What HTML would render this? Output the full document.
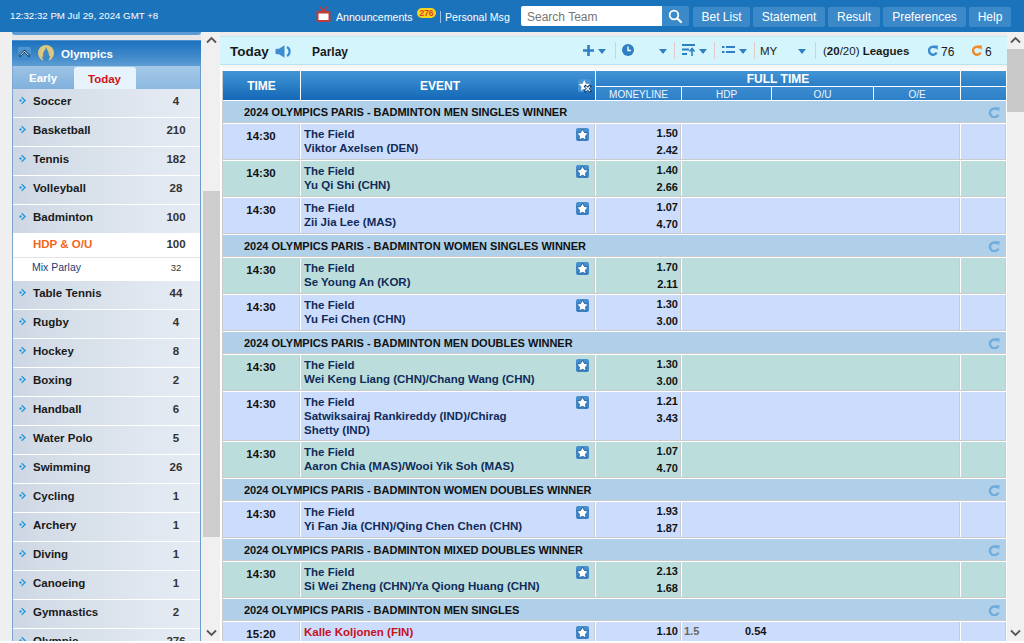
<!DOCTYPE html><html><head><meta charset="utf-8"><style>
*{box-sizing:border-box;margin:0;padding:0}
html,body{width:1024px;height:643px;overflow:hidden}
body{position:relative;background:#efefef;font-family:"Liberation Sans",sans-serif;color:#000}
.ab{position:absolute}
.t{position:absolute;white-space:nowrap;line-height:1}
#top{left:0;top:0;width:1024px;height:32px;background:#1b74bb}
.btn{position:absolute;top:7px;height:20px;background:#3b89c9;border-radius:2px;color:#fff;font-size:12px;line-height:20px;text-align:center}
.sb{position:absolute;background:#f0f0f0}
.chev{position:absolute;width:7px;height:7px;border-left:2px solid #555;border-top:2px solid #555}
.srow{position:absolute;left:13px;width:187px;height:28px;background:linear-gradient(to right,#cdd6e3 0px,#d2dbe6 25px,#d5dee8 45px,#dae2ec 90px,#e2e8f1 140px,#e5ebf3 187px)}
.srow .nm{position:absolute;left:20px;top:7px;font-size:11.5px;font-weight:bold;color:#1a1a1a;white-space:nowrap;line-height:1}
.srow .ct{position:absolute;left:123px;width:80px;top:7px;font-size:11.5px;font-weight:bold;color:#333;text-align:center;white-space:nowrap;line-height:1}
.arr{position:absolute;left:5px;top:7px;width:9px;height:9px}
.row{position:absolute;left:223px;width:783px}
.c{position:absolute;top:0}
.lav{background:#ccdcfc}
.tea{background:#bbdedd}
.lg{background:#afd0e8}
.gl{background:#cbcbcb}
.ev{font-size:11.5px;font-weight:bold;color:#112b58;line-height:14px;white-space:nowrap}
.tm{font-size:11.5px;font-weight:bold;color:#111;text-align:center;line-height:1}
.odds{font-size:11px;font-weight:bold;color:#111;text-align:right;line-height:17px}
.star{position:absolute;width:13px;height:13px;background:linear-gradient(#4890cf,#3a83c5);border-radius:2px}
.hd{position:absolute;background:linear-gradient(#4296d6,#1468b6);color:#fff;font-weight:bold;font-size:12px;text-align:center}
</style></head><body>
<div id="top" class="ab">
<div class="t" style="left:10px;top:11px;font-size:9.7px;color:#fff">12:32:32 PM Jul 29, 2024 GMT +8</div>
<svg class="ab" style="left:316px;top:6px" width="15" height="16" viewBox="0 0 15 16"><path d="M4 1 L7.5 5 L11 1" stroke="#c23b3b" stroke-width="1.6" fill="none"/><rect x="0.5" y="5" width="14" height="11" rx="1" fill="#c23b3b"/><rect x="2.5" y="7.5" width="10" height="6.5" fill="#fff"/></svg>
<div class="t" style="left:336px;top:12px;font-size:10.6px;color:#fff">Announcements</div>
<div class="ab" style="left:417px;top:8px;width:19px;height:10px;border-radius:5px;background:#f4d51c"></div>
<div class="t" style="left:417px;top:9px;width:19px;text-align:center;font-size:8.5px;font-weight:bold;color:#e0412a">276</div>
<div class="ab" style="left:440px;top:11px;width:1px;height:12px;background:#9cc3e6"></div>
<div class="t" style="left:445px;top:12px;font-size:10.6px;color:#fff">Personal Msg</div>
<div class="ab" style="left:521px;top:6px;width:141px;height:20px;background:#fff;border-radius:2px 0 0 2px"></div>
<div class="t" style="left:527px;top:11px;font-size:12px;color:#777">Search Team</div>
<div class="ab" style="left:662px;top:6px;width:27px;height:20px;background:#3b89c9;border-radius:0 2px 2px 0"></div>
<svg class="ab" style="left:668px;top:9px" width="15" height="15" viewBox="0 0 15 15"><circle cx="6" cy="6" r="4.3" stroke="#fff" stroke-width="1.8" fill="none"/><path d="M9.2 9.2 L13 13" stroke="#fff" stroke-width="2.2" stroke-linecap="round"/></svg>
<div class="btn" style="left:693px;width:57px">Bet List</div>
<div class="btn" style="left:753px;width:72px">Statement</div>
<div class="btn" style="left:828px;width:52px">Result</div>
<div class="btn" style="left:883px;width:83px">Preferences</div>
<div class="btn" style="left:969px;width:42px">Help</div>
</div>
<div class="ab" style="left:12px;top:32px;width:189px;height:8px;background:#e6e6e6"></div>
<div class="ab" style="left:12px;top:32px;width:189px;height:3px;background:#5b9bd3;border-radius:0 0 3px 3px"></div>
<div class="ab" style="left:12px;top:40px;width:189px;height:603px;background:#fff;border-left:1px solid #7ea8d3;border-right:1px solid #6d9dcf"></div>
<div class="ab" style="left:12px;top:40px;width:189px;height:26px;background:linear-gradient(#1c72bf,#3f88c9 60%,#5e9dd3);border-top:1px solid #4e8fcc"></div>
<div class="ab" style="left:18px;top:47px;width:13px;height:13px;background:linear-gradient(#5398d3,#3f88c9);border-radius:2px"></div>
<svg class="ab" style="left:18px;top:47px" width="13" height="13" viewBox="0 0 13 13"><path d="M2.2 8.5 L6.5 4.2 L10.8 8.5" stroke="#0d3b66" stroke-width="2.4" fill="none" stroke-linecap="square"/><path d="M2.2 8.5 L6.5 4.2 L10.8 8.5" stroke="#fff" stroke-width="1" fill="none"/></svg>
<svg class="ab" style="left:38px;top:45px" width="16" height="16" viewBox="0 0 16 16"><circle cx="8" cy="8" r="8" fill="#dcc87e"/><path d="M7.9 2 C8.6 4.5 11 6.2 10.8 9.8 L12.2 12 C11.2 13.4 10.8 14.6 10.5 16.5 L5.6 16.5 C5.3 14.8 4.8 13.5 4 12.2 L5.2 11.2 C4.6 8.4 5.6 6.6 6.7 5.2 C7.4 4.2 7.8 3.2 7.9 2 Z" fill="#3f88c8"/></svg>
<div class="t" style="left:61px;top:49px;font-size:11.5px;font-weight:bold;color:#fff">Olympics</div>
<div class="ab" style="left:13px;top:66px;width:187px;height:23px;background:linear-gradient(#a4c8e8,#8db9e0)"></div>
<div class="ab" style="left:13px;top:66px;width:61px;height:23px;background:linear-gradient(#9ec4e6,#7fb0dc)"></div>
<div class="t" style="left:29px;top:73px;font-size:11.5px;font-weight:bold;color:#fff">Early</div>
<div class="ab" style="left:74px;top:67px;width:62px;height:22px;background:#e6f3fc;border-radius:3px 3px 0 0"></div>
<div class="t" style="left:88px;top:74px;font-size:11.5px;font-weight:bold;color:#d0121b">Today</div>
<div class="srow" style="top:89px"><svg class="arr" viewBox="0 0 9 9"><path d="M1 4.5 L2.5 3 L4 4.5 L2.5 6 Z" fill="#2d9ad8"/><path d="M3.6 1.2 L7 4.5 L3.6 7.8" stroke="#2d9ad8" stroke-width="1.5" fill="none"/></svg><div class="nm">Soccer</div><div class="ct">4</div></div>
<div class="srow" style="top:118px"><svg class="arr" viewBox="0 0 9 9"><path d="M1 4.5 L2.5 3 L4 4.5 L2.5 6 Z" fill="#2d9ad8"/><path d="M3.6 1.2 L7 4.5 L3.6 7.8" stroke="#2d9ad8" stroke-width="1.5" fill="none"/></svg><div class="nm">Basketball</div><div class="ct">210</div></div>
<div class="srow" style="top:147px"><svg class="arr" viewBox="0 0 9 9"><path d="M1 4.5 L2.5 3 L4 4.5 L2.5 6 Z" fill="#2d9ad8"/><path d="M3.6 1.2 L7 4.5 L3.6 7.8" stroke="#2d9ad8" stroke-width="1.5" fill="none"/></svg><div class="nm">Tennis</div><div class="ct">182</div></div>
<div class="srow" style="top:176px"><svg class="arr" viewBox="0 0 9 9"><path d="M1 4.5 L2.5 3 L4 4.5 L2.5 6 Z" fill="#2d9ad8"/><path d="M3.6 1.2 L7 4.5 L3.6 7.8" stroke="#2d9ad8" stroke-width="1.5" fill="none"/></svg><div class="nm">Volleyball</div><div class="ct">28</div></div>
<div class="srow" style="top:205px"><svg class="arr" viewBox="0 0 9 9"><path d="M1 4.5 L2.5 3 L4 4.5 L2.5 6 Z" fill="#2d9ad8"/><path d="M3.6 1.2 L7 4.5 L3.6 7.8" stroke="#2d9ad8" stroke-width="1.5" fill="none"/></svg><div class="nm">Badminton</div><div class="ct">100</div></div>
<div class="ab" style="left:13px;top:233px;width:187px;height:48px;background:#fff"></div>
<div class="ab" style="left:13px;top:257px;width:187px;height:1px;background:#e4e4e4"></div>
<div class="t" style="left:33px;top:239px;font-size:11.5px;font-weight:bold;color:#f4661b">HDP &amp; O/U</div>
<div class="t" style="left:136px;width:80px;text-align:center;top:239px;font-size:11.5px;font-weight:bold;color:#333">100</div>
<div class="t" style="left:32px;top:262px;font-size:10.5px;color:#1b3d7a">Mix Parlay</div>
<div class="t" style="left:136px;width:80px;text-align:center;top:263px;font-size:9.5px;color:#333">32</div>
<div class="srow" style="top:281px"><svg class="arr" viewBox="0 0 9 9"><path d="M1 4.5 L2.5 3 L4 4.5 L2.5 6 Z" fill="#2d9ad8"/><path d="M3.6 1.2 L7 4.5 L3.6 7.8" stroke="#2d9ad8" stroke-width="1.5" fill="none"/></svg><div class="nm">Table Tennis</div><div class="ct">44</div></div>
<div class="srow" style="top:310px"><svg class="arr" viewBox="0 0 9 9"><path d="M1 4.5 L2.5 3 L4 4.5 L2.5 6 Z" fill="#2d9ad8"/><path d="M3.6 1.2 L7 4.5 L3.6 7.8" stroke="#2d9ad8" stroke-width="1.5" fill="none"/></svg><div class="nm">Rugby</div><div class="ct">4</div></div>
<div class="srow" style="top:339px"><svg class="arr" viewBox="0 0 9 9"><path d="M1 4.5 L2.5 3 L4 4.5 L2.5 6 Z" fill="#2d9ad8"/><path d="M3.6 1.2 L7 4.5 L3.6 7.8" stroke="#2d9ad8" stroke-width="1.5" fill="none"/></svg><div class="nm">Hockey</div><div class="ct">8</div></div>
<div class="srow" style="top:368px"><svg class="arr" viewBox="0 0 9 9"><path d="M1 4.5 L2.5 3 L4 4.5 L2.5 6 Z" fill="#2d9ad8"/><path d="M3.6 1.2 L7 4.5 L3.6 7.8" stroke="#2d9ad8" stroke-width="1.5" fill="none"/></svg><div class="nm">Boxing</div><div class="ct">2</div></div>
<div class="srow" style="top:397px"><svg class="arr" viewBox="0 0 9 9"><path d="M1 4.5 L2.5 3 L4 4.5 L2.5 6 Z" fill="#2d9ad8"/><path d="M3.6 1.2 L7 4.5 L3.6 7.8" stroke="#2d9ad8" stroke-width="1.5" fill="none"/></svg><div class="nm">Handball</div><div class="ct">6</div></div>
<div class="srow" style="top:426px"><svg class="arr" viewBox="0 0 9 9"><path d="M1 4.5 L2.5 3 L4 4.5 L2.5 6 Z" fill="#2d9ad8"/><path d="M3.6 1.2 L7 4.5 L3.6 7.8" stroke="#2d9ad8" stroke-width="1.5" fill="none"/></svg><div class="nm">Water Polo</div><div class="ct">5</div></div>
<div class="srow" style="top:455px"><svg class="arr" viewBox="0 0 9 9"><path d="M1 4.5 L2.5 3 L4 4.5 L2.5 6 Z" fill="#2d9ad8"/><path d="M3.6 1.2 L7 4.5 L3.6 7.8" stroke="#2d9ad8" stroke-width="1.5" fill="none"/></svg><div class="nm">Swimming</div><div class="ct">26</div></div>
<div class="srow" style="top:484px"><svg class="arr" viewBox="0 0 9 9"><path d="M1 4.5 L2.5 3 L4 4.5 L2.5 6 Z" fill="#2d9ad8"/><path d="M3.6 1.2 L7 4.5 L3.6 7.8" stroke="#2d9ad8" stroke-width="1.5" fill="none"/></svg><div class="nm">Cycling</div><div class="ct">1</div></div>
<div class="srow" style="top:513px"><svg class="arr" viewBox="0 0 9 9"><path d="M1 4.5 L2.5 3 L4 4.5 L2.5 6 Z" fill="#2d9ad8"/><path d="M3.6 1.2 L7 4.5 L3.6 7.8" stroke="#2d9ad8" stroke-width="1.5" fill="none"/></svg><div class="nm">Archery</div><div class="ct">1</div></div>
<div class="srow" style="top:542px"><svg class="arr" viewBox="0 0 9 9"><path d="M1 4.5 L2.5 3 L4 4.5 L2.5 6 Z" fill="#2d9ad8"/><path d="M3.6 1.2 L7 4.5 L3.6 7.8" stroke="#2d9ad8" stroke-width="1.5" fill="none"/></svg><div class="nm">Diving</div><div class="ct">1</div></div>
<div class="srow" style="top:571px"><svg class="arr" viewBox="0 0 9 9"><path d="M1 4.5 L2.5 3 L4 4.5 L2.5 6 Z" fill="#2d9ad8"/><path d="M3.6 1.2 L7 4.5 L3.6 7.8" stroke="#2d9ad8" stroke-width="1.5" fill="none"/></svg><div class="nm">Canoeing</div><div class="ct">1</div></div>
<div class="srow" style="top:600px"><svg class="arr" viewBox="0 0 9 9"><path d="M1 4.5 L2.5 3 L4 4.5 L2.5 6 Z" fill="#2d9ad8"/><path d="M3.6 1.2 L7 4.5 L3.6 7.8" stroke="#2d9ad8" stroke-width="1.5" fill="none"/></svg><div class="nm">Gymnastics</div><div class="ct">2</div></div>
<div class="srow" style="top:629px"><svg class="arr" viewBox="0 0 9 9"><path d="M1 4.5 L2.5 3 L4 4.5 L2.5 6 Z" fill="#2d9ad8"/><path d="M3.6 1.2 L7 4.5 L3.6 7.8" stroke="#2d9ad8" stroke-width="1.5" fill="none"/></svg><div class="nm">Olympic</div><div class="ct">276</div></div>
<div class="sb" style="left:201px;top:32px;width:19px;height:611px"></div>
<div class="ab" style="left:220px;top:32px;width:2px;height:611px;background:#fff"></div>
<div class="ab" style="left:203px;top:191px;width:17px;height:346px;background:#cdcdcd"></div>
<svg class="ab" style="left:206px;top:36px" width="11" height="8" viewBox="0 0 11 8"><path d="M1 6.5 L5.5 2 L10 6.5" stroke="#555" stroke-width="1.8" fill="none"/></svg>
<svg class="ab" style="left:206px;top:629px" width="11" height="8" viewBox="0 0 11 8"><path d="M1 1.5 L5.5 6 L10 1.5" stroke="#555" stroke-width="1.8" fill="none"/></svg>
<div class="sb" style="left:1007px;top:32px;width:17px;height:611px"></div>
<div class="ab" style="left:1007px;top:49px;width:17px;height:63px;background:#c8c8c8"></div>
<svg class="ab" style="left:1010px;top:629px" width="11" height="8" viewBox="0 0 11 8"><path d="M1 1.5 L5.5 6 L10 1.5" stroke="#555" stroke-width="1.8" fill="none"/></svg>
<svg class="ab" style="left:1010px;top:36px" width="11" height="8" viewBox="0 0 11 8"><path d="M1 6.5 L5.5 2 L10 6.5" stroke="#555" stroke-width="1.8" fill="none"/></svg>
<div class="ab" style="left:222px;top:32px;width:785px;height:611px;background:#fff"></div>
<div class="ab" style="left:220px;top:32px;width:787px;height:4px;background:#ececec"></div>
<div class="ab" style="left:220px;top:36px;width:787px;height:29px;background:#d5f5fd;border-top:1px solid #c0e8f2;border-bottom:1px solid #b7e2ee"></div>
<div class="t" style="left:230px;top:45px;font-size:13.5px;font-weight:bold;color:#1a1a1a">Today</div>
<svg class="ab" style="left:275px;top:45px" width="17" height="13" viewBox="0 0 17 13"><path d="M0.5 5 Q0.5 3.8 1.8 3.8 H4 L9.5 0.3 V12.7 L4 9.2 H1.8 Q0.5 9.2 0.5 8 Z" fill="#3d8bd0"/><path d="M12 2 A5.2 5.2 0 0 1 12 11" stroke="#3d8bd0" stroke-width="2.2" fill="none"/></svg>
<div class="t" style="left:312px;top:46px;font-size:12px;font-weight:bold;color:#1a1a1a">Parlay</div>
<svg class="ab" style="left:583px;top:45px" width="11" height="11" viewBox="0 0 11 11"><path d="M5.5 0 V11 M0 5.5 H11" stroke="#2f7fc4" stroke-width="2.6"/></svg>
<svg class="ab" style="left:598px;top:49px" width="8" height="5" viewBox="0 0 8 5"><path d="M0 0 H8 L4 5 Z" fill="#2f7fc4"/></svg>
<div class="ab" style="left:615px;top:42px;width:1px;height:17px;background:#e3c9c9"></div>
<svg class="ab" style="left:622px;top:44px" width="12" height="12" viewBox="0 0 12 12"><circle cx="6" cy="6" r="6" fill="#2f7fc4"/><path d="M6 2.5 V6.5 H9" stroke="#fff" stroke-width="1.4" fill="none"/></svg>
<svg class="ab" style="left:659px;top:49px" width="8" height="5" viewBox="0 0 8 5"><path d="M0 0 H8 L4 5 Z" fill="#2f7fc4"/></svg>
<div class="ab" style="left:674px;top:42px;width:1px;height:17px;background:#e3c9c9"></div>
<svg class="ab" style="left:682px;top:44px" width="14" height="12" viewBox="0 0 14 12"><path d="M0 1 H13 M0 5.5 H7 M0 10 H5" stroke="#2f7fc4" stroke-width="1.8"/><path d="M10 12 V5 M7.5 7.5 L10 4.5 L12.5 7.5" stroke="#2f7fc4" stroke-width="1.6" fill="none"/></svg>
<svg class="ab" style="left:699px;top:49px" width="8" height="5" viewBox="0 0 8 5"><path d="M0 0 H8 L4 5 Z" fill="#2f7fc4"/></svg>
<div class="ab" style="left:714px;top:42px;width:1px;height:17px;background:#e3c9c9"></div>
<svg class="ab" style="left:722px;top:45px" width="13" height="10" viewBox="0 0 13 10"><path d="M0 2 H2.5 M4 2 H13 M0 7 H2.5 M4 7 H13" stroke="#2f7fc4" stroke-width="2"/></svg>
<svg class="ab" style="left:739px;top:49px" width="8" height="5" viewBox="0 0 8 5"><path d="M0 0 H8 L4 5 Z" fill="#2f7fc4"/></svg>
<div class="ab" style="left:754px;top:42px;width:1px;height:17px;background:#e3c9c9"></div>
<div class="t" style="left:760px;top:46px;font-size:11.5px;color:#222">MY</div>
<svg class="ab" style="left:798px;top:49px" width="8" height="5" viewBox="0 0 8 5"><path d="M0 0 H8 L4 5 Z" fill="#2f7fc4"/></svg>
<div class="ab" style="left:815px;top:42px;width:1px;height:17px;background:#e3c9c9"></div>
<div class="t" style="left:823px;top:46px;font-size:11.5px;color:#1a1a1a">(<b>20</b>/20) <b>Leagues</b></div>
<svg class="ab" style="left:928px;top:45px" width="10" height="11" viewBox="0 0 10 11"><path d="M8 3 A4 4 0 1 0 8.6 7.5" stroke="#3d8bd0" stroke-width="2.4" fill="none"/><path d="M5.5 0.5 L10 0.5 L9.5 5 Z" fill="#3d8bd0"/></svg>
<div class="t" style="left:941px;top:46px;font-size:12px;color:#1a1a1a">76</div>
<svg class="ab" style="left:972px;top:45px" width="10" height="11" viewBox="0 0 10 11"><path d="M8 3 A4 4 0 1 0 8.6 7.5" stroke="#f08a2a" stroke-width="2.4" fill="none"/><path d="M5.5 0.5 L10 0.5 L9.5 5 Z" fill="#f08a2a"/></svg>
<div class="t" style="left:985px;top:46px;font-size:12px;color:#1a1a1a">6</div>
<div class="ab" style="left:222px;top:65px;width:785px;height:6px;background:linear-gradient(#f3f3f3,#fcfcfc)"></div>
<div class="ab" style="left:222px;top:71px;width:1px;height:572px;background:#cbcbcb"></div>
<div class="hd" style="left:223px;top:71px;width:77px;height:29px;line-height:31px">TIME</div>
<div class="hd" style="left:301px;top:71px;width:294px;height:29px;line-height:31px;padding-right:16px">EVENT</div>
<div class="ab" style="left:578px;top:79px;width:13px;height:13px;background:#4a94d3;border-radius:2px"></div>
<svg class="ab" style="left:578px;top:79px" width="14" height="14" viewBox="0 0 14 14"><path d="M6.20 1.10 L7.85 4.63 L11.72 5.11 L8.86 7.77 L9.61 11.59 L6.20 9.70 L2.79 11.59 L3.54 7.77 L0.68 5.11 L4.55 4.63 Z" fill="#fff"/><path d="M7.5 7.5 L12 12 M12 7.5 L7.5 12" stroke="#0d3e6e" stroke-width="2.8" stroke-linecap="square" fill="none"/><path d="M7.5 7.5 L12 12 M12 7.5 L7.5 12" stroke="#fff" stroke-width="1.1" fill="none"/></svg>
<div class="ab" style="left:596px;top:71px;width:364px;height:15px;background:linear-gradient(#4296d6,#2b7dc6);color:#fff;font-weight:bold;font-size:12px;text-align:center;line-height:17px">FULL TIME</div>
<div class="ab" style="left:961px;top:71px;width:45px;height:15px;background:linear-gradient(#4296d6,#2b7dc6)"></div>
<div class="ab" style="left:596px;top:87px;width:85px;height:13px;background:linear-gradient(#3a8bcf,#2e81c9);color:#eef5ff;font-size:10px;text-align:center;line-height:16px">MONEYLINE</div>
<div class="ab" style="left:682px;top:87px;width:89px;height:13px;background:linear-gradient(#3a8bcf,#2e81c9);color:#eef5ff;font-size:10px;text-align:center;line-height:16px">HDP</div>
<div class="ab" style="left:772px;top:87px;width:101px;height:13px;background:linear-gradient(#3a8bcf,#2e81c9);color:#eef5ff;font-size:10px;text-align:center;line-height:16px">O/U</div>
<div class="ab" style="left:874px;top:87px;width:86px;height:13px;background:linear-gradient(#3a8bcf,#2e81c9);color:#eef5ff;font-size:10px;text-align:center;line-height:16px">O/E</div>
<div class="ab" style="left:961px;top:87px;width:45px;height:13px;background:linear-gradient(#3a8bcf,#2e81c9);color:#eef5ff;font-size:10px;text-align:center;line-height:16px"></div>
<div class="ab lg" style="left:223px;top:101px;width:783px;height:21px"></div>
<div class="ab gl" style="left:223px;top:122px;width:783px;height:1px"></div>
<div class="t" style="left:244px;top:107px;font-size:11px;font-weight:bold;color:#111">2024 OLYMPICS PARIS - BADMINTON MEN SINGLES WINNER</div>
<svg class="ab" style="left:988px;top:106px" width="12" height="12" viewBox="0 0 12 12"><path d="M9.3 3.6 A4.4 4.4 0 1 0 10.4 8.6" stroke="#70acdc" stroke-width="2.4" fill="none"/><path d="M6.8 1.2 L11.6 1.2 L11.2 5.6 Z" fill="#70acdc"/></svg>
<div class="ab lav" style="left:223px;top:124px;width:76px;height:35px"></div>
<div class="ab gl" style="left:299px;top:124px;width:1px;height:36px"></div>
<div class="ab lav" style="left:301px;top:124px;width:293px;height:35px"></div>
<div class="ab gl" style="left:594px;top:124px;width:1px;height:36px"></div>
<div class="ab lav" style="left:596px;top:124px;width:84px;height:35px"></div>
<div class="ab gl" style="left:680px;top:124px;width:1px;height:36px"></div>
<div class="ab lav" style="left:682px;top:124px;width:277px;height:35px"></div>
<div class="ab gl" style="left:959px;top:124px;width:1px;height:36px"></div>
<div class="ab lav" style="left:961px;top:124px;width:44px;height:35px"></div>
<div class="ab gl" style="left:1005px;top:124px;width:1px;height:36px"></div>
<div class="ab gl" style="left:223px;top:159px;width:783px;height:1px"></div>
<div class="t tm" style="left:223px;width:76px;top:131px">14:30</div>
<div class="ab ev" style="left:304px;top:127px;color:#112b58">The Field<br>Viktor Axelsen (DEN)</div>
<div class="star" style="left:576px;top:128px"><svg width="13" height="13" viewBox="0 0 13 13" style="position:absolute;left:0;top:0"><path d="M6.50 1.00 L8.41 4.47 L12.30 5.21 L9.59 8.10 L10.09 12.04 L6.50 10.35 L2.91 12.04 L3.41 8.10 L0.70 5.21 L4.59 4.47 Z" fill="#fff" stroke="#1f5c9c" stroke-width="0.9" stroke-linejoin="round"/></svg></div>
<div class="ab odds" style="left:596px;width:82px;top:125px">1.50<br>2.42</div>
<div class="ab tea" style="left:223px;top:161px;width:76px;height:35px"></div>
<div class="ab gl" style="left:299px;top:161px;width:1px;height:36px"></div>
<div class="ab tea" style="left:301px;top:161px;width:293px;height:35px"></div>
<div class="ab gl" style="left:594px;top:161px;width:1px;height:36px"></div>
<div class="ab tea" style="left:596px;top:161px;width:84px;height:35px"></div>
<div class="ab gl" style="left:680px;top:161px;width:1px;height:36px"></div>
<div class="ab tea" style="left:682px;top:161px;width:277px;height:35px"></div>
<div class="ab gl" style="left:959px;top:161px;width:1px;height:36px"></div>
<div class="ab tea" style="left:961px;top:161px;width:44px;height:35px"></div>
<div class="ab gl" style="left:1005px;top:161px;width:1px;height:36px"></div>
<div class="ab gl" style="left:223px;top:196px;width:783px;height:1px"></div>
<div class="t tm" style="left:223px;width:76px;top:168px">14:30</div>
<div class="ab ev" style="left:304px;top:164px;color:#112b58">The Field<br>Yu Qi Shi (CHN)</div>
<div class="star" style="left:576px;top:165px"><svg width="13" height="13" viewBox="0 0 13 13" style="position:absolute;left:0;top:0"><path d="M6.50 1.00 L8.41 4.47 L12.30 5.21 L9.59 8.10 L10.09 12.04 L6.50 10.35 L2.91 12.04 L3.41 8.10 L0.70 5.21 L4.59 4.47 Z" fill="#fff" stroke="#1f5c9c" stroke-width="0.9" stroke-linejoin="round"/></svg></div>
<div class="ab odds" style="left:596px;width:82px;top:162px">1.40<br>2.66</div>
<div class="ab lav" style="left:223px;top:198px;width:76px;height:35px"></div>
<div class="ab gl" style="left:299px;top:198px;width:1px;height:36px"></div>
<div class="ab lav" style="left:301px;top:198px;width:293px;height:35px"></div>
<div class="ab gl" style="left:594px;top:198px;width:1px;height:36px"></div>
<div class="ab lav" style="left:596px;top:198px;width:84px;height:35px"></div>
<div class="ab gl" style="left:680px;top:198px;width:1px;height:36px"></div>
<div class="ab lav" style="left:682px;top:198px;width:277px;height:35px"></div>
<div class="ab gl" style="left:959px;top:198px;width:1px;height:36px"></div>
<div class="ab lav" style="left:961px;top:198px;width:44px;height:35px"></div>
<div class="ab gl" style="left:1005px;top:198px;width:1px;height:36px"></div>
<div class="ab gl" style="left:223px;top:233px;width:783px;height:1px"></div>
<div class="t tm" style="left:223px;width:76px;top:205px">14:30</div>
<div class="ab ev" style="left:304px;top:201px;color:#112b58">The Field<br>Zii Jia Lee (MAS)</div>
<div class="star" style="left:576px;top:202px"><svg width="13" height="13" viewBox="0 0 13 13" style="position:absolute;left:0;top:0"><path d="M6.50 1.00 L8.41 4.47 L12.30 5.21 L9.59 8.10 L10.09 12.04 L6.50 10.35 L2.91 12.04 L3.41 8.10 L0.70 5.21 L4.59 4.47 Z" fill="#fff" stroke="#1f5c9c" stroke-width="0.9" stroke-linejoin="round"/></svg></div>
<div class="ab odds" style="left:596px;width:82px;top:199px">1.07<br>4.70</div>
<div class="ab lg" style="left:223px;top:235px;width:783px;height:21px"></div>
<div class="ab gl" style="left:223px;top:256px;width:783px;height:1px"></div>
<div class="t" style="left:244px;top:241px;font-size:11px;font-weight:bold;color:#111">2024 OLYMPICS PARIS - BADMINTON WOMEN SINGLES WINNER</div>
<svg class="ab" style="left:988px;top:240px" width="12" height="12" viewBox="0 0 12 12"><path d="M9.3 3.6 A4.4 4.4 0 1 0 10.4 8.6" stroke="#70acdc" stroke-width="2.4" fill="none"/><path d="M6.8 1.2 L11.6 1.2 L11.2 5.6 Z" fill="#70acdc"/></svg>
<div class="ab tea" style="left:223px;top:258px;width:76px;height:35px"></div>
<div class="ab gl" style="left:299px;top:258px;width:1px;height:36px"></div>
<div class="ab tea" style="left:301px;top:258px;width:293px;height:35px"></div>
<div class="ab gl" style="left:594px;top:258px;width:1px;height:36px"></div>
<div class="ab tea" style="left:596px;top:258px;width:84px;height:35px"></div>
<div class="ab gl" style="left:680px;top:258px;width:1px;height:36px"></div>
<div class="ab tea" style="left:682px;top:258px;width:277px;height:35px"></div>
<div class="ab gl" style="left:959px;top:258px;width:1px;height:36px"></div>
<div class="ab tea" style="left:961px;top:258px;width:44px;height:35px"></div>
<div class="ab gl" style="left:1005px;top:258px;width:1px;height:36px"></div>
<div class="ab gl" style="left:223px;top:293px;width:783px;height:1px"></div>
<div class="t tm" style="left:223px;width:76px;top:265px">14:30</div>
<div class="ab ev" style="left:304px;top:261px;color:#112b58">The Field<br>Se Young An (KOR)</div>
<div class="star" style="left:576px;top:262px"><svg width="13" height="13" viewBox="0 0 13 13" style="position:absolute;left:0;top:0"><path d="M6.50 1.00 L8.41 4.47 L12.30 5.21 L9.59 8.10 L10.09 12.04 L6.50 10.35 L2.91 12.04 L3.41 8.10 L0.70 5.21 L4.59 4.47 Z" fill="#fff" stroke="#1f5c9c" stroke-width="0.9" stroke-linejoin="round"/></svg></div>
<div class="ab odds" style="left:596px;width:82px;top:259px">1.70<br>2.11</div>
<div class="ab lav" style="left:223px;top:295px;width:76px;height:35px"></div>
<div class="ab gl" style="left:299px;top:295px;width:1px;height:36px"></div>
<div class="ab lav" style="left:301px;top:295px;width:293px;height:35px"></div>
<div class="ab gl" style="left:594px;top:295px;width:1px;height:36px"></div>
<div class="ab lav" style="left:596px;top:295px;width:84px;height:35px"></div>
<div class="ab gl" style="left:680px;top:295px;width:1px;height:36px"></div>
<div class="ab lav" style="left:682px;top:295px;width:277px;height:35px"></div>
<div class="ab gl" style="left:959px;top:295px;width:1px;height:36px"></div>
<div class="ab lav" style="left:961px;top:295px;width:44px;height:35px"></div>
<div class="ab gl" style="left:1005px;top:295px;width:1px;height:36px"></div>
<div class="ab gl" style="left:223px;top:330px;width:783px;height:1px"></div>
<div class="t tm" style="left:223px;width:76px;top:302px">14:30</div>
<div class="ab ev" style="left:304px;top:298px;color:#112b58">The Field<br>Yu Fei Chen (CHN)</div>
<div class="star" style="left:576px;top:299px"><svg width="13" height="13" viewBox="0 0 13 13" style="position:absolute;left:0;top:0"><path d="M6.50 1.00 L8.41 4.47 L12.30 5.21 L9.59 8.10 L10.09 12.04 L6.50 10.35 L2.91 12.04 L3.41 8.10 L0.70 5.21 L4.59 4.47 Z" fill="#fff" stroke="#1f5c9c" stroke-width="0.9" stroke-linejoin="round"/></svg></div>
<div class="ab odds" style="left:596px;width:82px;top:296px">1.30<br>3.00</div>
<div class="ab lg" style="left:223px;top:332px;width:783px;height:21px"></div>
<div class="ab gl" style="left:223px;top:353px;width:783px;height:1px"></div>
<div class="t" style="left:244px;top:338px;font-size:11px;font-weight:bold;color:#111">2024 OLYMPICS PARIS - BADMINTON MEN DOUBLES WINNER</div>
<svg class="ab" style="left:988px;top:337px" width="12" height="12" viewBox="0 0 12 12"><path d="M9.3 3.6 A4.4 4.4 0 1 0 10.4 8.6" stroke="#70acdc" stroke-width="2.4" fill="none"/><path d="M6.8 1.2 L11.6 1.2 L11.2 5.6 Z" fill="#70acdc"/></svg>
<div class="ab tea" style="left:223px;top:355px;width:76px;height:35px"></div>
<div class="ab gl" style="left:299px;top:355px;width:1px;height:36px"></div>
<div class="ab tea" style="left:301px;top:355px;width:293px;height:35px"></div>
<div class="ab gl" style="left:594px;top:355px;width:1px;height:36px"></div>
<div class="ab tea" style="left:596px;top:355px;width:84px;height:35px"></div>
<div class="ab gl" style="left:680px;top:355px;width:1px;height:36px"></div>
<div class="ab tea" style="left:682px;top:355px;width:277px;height:35px"></div>
<div class="ab gl" style="left:959px;top:355px;width:1px;height:36px"></div>
<div class="ab tea" style="left:961px;top:355px;width:44px;height:35px"></div>
<div class="ab gl" style="left:1005px;top:355px;width:1px;height:36px"></div>
<div class="ab gl" style="left:223px;top:390px;width:783px;height:1px"></div>
<div class="t tm" style="left:223px;width:76px;top:362px">14:30</div>
<div class="ab ev" style="left:304px;top:358px;color:#112b58">The Field<br>Wei Keng Liang (CHN)/Chang Wang (CHN)</div>
<div class="star" style="left:576px;top:359px"><svg width="13" height="13" viewBox="0 0 13 13" style="position:absolute;left:0;top:0"><path d="M6.50 1.00 L8.41 4.47 L12.30 5.21 L9.59 8.10 L10.09 12.04 L6.50 10.35 L2.91 12.04 L3.41 8.10 L0.70 5.21 L4.59 4.47 Z" fill="#fff" stroke="#1f5c9c" stroke-width="0.9" stroke-linejoin="round"/></svg></div>
<div class="ab odds" style="left:596px;width:82px;top:356px">1.30<br>3.00</div>
<div class="ab lav" style="left:223px;top:392px;width:76px;height:48px"></div>
<div class="ab gl" style="left:299px;top:392px;width:1px;height:49px"></div>
<div class="ab lav" style="left:301px;top:392px;width:293px;height:48px"></div>
<div class="ab gl" style="left:594px;top:392px;width:1px;height:49px"></div>
<div class="ab lav" style="left:596px;top:392px;width:84px;height:48px"></div>
<div class="ab gl" style="left:680px;top:392px;width:1px;height:49px"></div>
<div class="ab lav" style="left:682px;top:392px;width:277px;height:48px"></div>
<div class="ab gl" style="left:959px;top:392px;width:1px;height:49px"></div>
<div class="ab lav" style="left:961px;top:392px;width:44px;height:48px"></div>
<div class="ab gl" style="left:1005px;top:392px;width:1px;height:49px"></div>
<div class="ab gl" style="left:223px;top:440px;width:783px;height:1px"></div>
<div class="t tm" style="left:223px;width:76px;top:399px">14:30</div>
<div class="ab ev" style="left:304px;top:395px;color:#112b58">The Field<br>Satwiksairaj Rankireddy (IND)/Chirag<br>Shetty (IND)</div>
<div class="star" style="left:576px;top:396px"><svg width="13" height="13" viewBox="0 0 13 13" style="position:absolute;left:0;top:0"><path d="M6.50 1.00 L8.41 4.47 L12.30 5.21 L9.59 8.10 L10.09 12.04 L6.50 10.35 L2.91 12.04 L3.41 8.10 L0.70 5.21 L4.59 4.47 Z" fill="#fff" stroke="#1f5c9c" stroke-width="0.9" stroke-linejoin="round"/></svg></div>
<div class="ab odds" style="left:596px;width:82px;top:393px">1.21<br>3.43</div>
<div class="ab tea" style="left:223px;top:442px;width:76px;height:35px"></div>
<div class="ab gl" style="left:299px;top:442px;width:1px;height:36px"></div>
<div class="ab tea" style="left:301px;top:442px;width:293px;height:35px"></div>
<div class="ab gl" style="left:594px;top:442px;width:1px;height:36px"></div>
<div class="ab tea" style="left:596px;top:442px;width:84px;height:35px"></div>
<div class="ab gl" style="left:680px;top:442px;width:1px;height:36px"></div>
<div class="ab tea" style="left:682px;top:442px;width:277px;height:35px"></div>
<div class="ab gl" style="left:959px;top:442px;width:1px;height:36px"></div>
<div class="ab tea" style="left:961px;top:442px;width:44px;height:35px"></div>
<div class="ab gl" style="left:1005px;top:442px;width:1px;height:36px"></div>
<div class="ab gl" style="left:223px;top:477px;width:783px;height:1px"></div>
<div class="t tm" style="left:223px;width:76px;top:449px">14:30</div>
<div class="ab ev" style="left:304px;top:445px;color:#112b58">The Field<br>Aaron Chia (MAS)/Wooi Yik Soh (MAS)</div>
<div class="star" style="left:576px;top:446px"><svg width="13" height="13" viewBox="0 0 13 13" style="position:absolute;left:0;top:0"><path d="M6.50 1.00 L8.41 4.47 L12.30 5.21 L9.59 8.10 L10.09 12.04 L6.50 10.35 L2.91 12.04 L3.41 8.10 L0.70 5.21 L4.59 4.47 Z" fill="#fff" stroke="#1f5c9c" stroke-width="0.9" stroke-linejoin="round"/></svg></div>
<div class="ab odds" style="left:596px;width:82px;top:443px">1.07<br>4.70</div>
<div class="ab lg" style="left:223px;top:479px;width:783px;height:21px"></div>
<div class="ab gl" style="left:223px;top:500px;width:783px;height:1px"></div>
<div class="t" style="left:244px;top:485px;font-size:11px;font-weight:bold;color:#111">2024 OLYMPICS PARIS - BADMINTON WOMEN DOUBLES WINNER</div>
<svg class="ab" style="left:988px;top:484px" width="12" height="12" viewBox="0 0 12 12"><path d="M9.3 3.6 A4.4 4.4 0 1 0 10.4 8.6" stroke="#70acdc" stroke-width="2.4" fill="none"/><path d="M6.8 1.2 L11.6 1.2 L11.2 5.6 Z" fill="#70acdc"/></svg>
<div class="ab lav" style="left:223px;top:502px;width:76px;height:35px"></div>
<div class="ab gl" style="left:299px;top:502px;width:1px;height:36px"></div>
<div class="ab lav" style="left:301px;top:502px;width:293px;height:35px"></div>
<div class="ab gl" style="left:594px;top:502px;width:1px;height:36px"></div>
<div class="ab lav" style="left:596px;top:502px;width:84px;height:35px"></div>
<div class="ab gl" style="left:680px;top:502px;width:1px;height:36px"></div>
<div class="ab lav" style="left:682px;top:502px;width:277px;height:35px"></div>
<div class="ab gl" style="left:959px;top:502px;width:1px;height:36px"></div>
<div class="ab lav" style="left:961px;top:502px;width:44px;height:35px"></div>
<div class="ab gl" style="left:1005px;top:502px;width:1px;height:36px"></div>
<div class="ab gl" style="left:223px;top:537px;width:783px;height:1px"></div>
<div class="t tm" style="left:223px;width:76px;top:509px">14:30</div>
<div class="ab ev" style="left:304px;top:505px;color:#112b58">The Field<br>Yi Fan Jia (CHN)/Qing Chen Chen (CHN)</div>
<div class="star" style="left:576px;top:506px"><svg width="13" height="13" viewBox="0 0 13 13" style="position:absolute;left:0;top:0"><path d="M6.50 1.00 L8.41 4.47 L12.30 5.21 L9.59 8.10 L10.09 12.04 L6.50 10.35 L2.91 12.04 L3.41 8.10 L0.70 5.21 L4.59 4.47 Z" fill="#fff" stroke="#1f5c9c" stroke-width="0.9" stroke-linejoin="round"/></svg></div>
<div class="ab odds" style="left:596px;width:82px;top:503px">1.93<br>1.87</div>
<div class="ab lg" style="left:223px;top:539px;width:783px;height:21px"></div>
<div class="ab gl" style="left:223px;top:560px;width:783px;height:1px"></div>
<div class="t" style="left:244px;top:545px;font-size:11px;font-weight:bold;color:#111">2024 OLYMPICS PARIS - BADMINTON MIXED DOUBLES WINNER</div>
<svg class="ab" style="left:988px;top:544px" width="12" height="12" viewBox="0 0 12 12"><path d="M9.3 3.6 A4.4 4.4 0 1 0 10.4 8.6" stroke="#70acdc" stroke-width="2.4" fill="none"/><path d="M6.8 1.2 L11.6 1.2 L11.2 5.6 Z" fill="#70acdc"/></svg>
<div class="ab tea" style="left:223px;top:562px;width:76px;height:35px"></div>
<div class="ab gl" style="left:299px;top:562px;width:1px;height:36px"></div>
<div class="ab tea" style="left:301px;top:562px;width:293px;height:35px"></div>
<div class="ab gl" style="left:594px;top:562px;width:1px;height:36px"></div>
<div class="ab tea" style="left:596px;top:562px;width:84px;height:35px"></div>
<div class="ab gl" style="left:680px;top:562px;width:1px;height:36px"></div>
<div class="ab tea" style="left:682px;top:562px;width:277px;height:35px"></div>
<div class="ab gl" style="left:959px;top:562px;width:1px;height:36px"></div>
<div class="ab tea" style="left:961px;top:562px;width:44px;height:35px"></div>
<div class="ab gl" style="left:1005px;top:562px;width:1px;height:36px"></div>
<div class="ab gl" style="left:223px;top:597px;width:783px;height:1px"></div>
<div class="t tm" style="left:223px;width:76px;top:569px">14:30</div>
<div class="ab ev" style="left:304px;top:565px;color:#112b58">The Field<br>Si Wei Zheng (CHN)/Ya Qiong Huang (CHN)</div>
<div class="star" style="left:576px;top:566px"><svg width="13" height="13" viewBox="0 0 13 13" style="position:absolute;left:0;top:0"><path d="M6.50 1.00 L8.41 4.47 L12.30 5.21 L9.59 8.10 L10.09 12.04 L6.50 10.35 L2.91 12.04 L3.41 8.10 L0.70 5.21 L4.59 4.47 Z" fill="#fff" stroke="#1f5c9c" stroke-width="0.9" stroke-linejoin="round"/></svg></div>
<div class="ab odds" style="left:596px;width:82px;top:563px">2.13<br>1.68</div>
<div class="ab lg" style="left:223px;top:599px;width:783px;height:21px"></div>
<div class="ab gl" style="left:223px;top:620px;width:783px;height:1px"></div>
<div class="t" style="left:244px;top:605px;font-size:11px;font-weight:bold;color:#111">2024 OLYMPICS PARIS - BADMINTON MEN SINGLES</div>
<svg class="ab" style="left:988px;top:604px" width="12" height="12" viewBox="0 0 12 12"><path d="M9.3 3.6 A4.4 4.4 0 1 0 10.4 8.6" stroke="#70acdc" stroke-width="2.4" fill="none"/><path d="M6.8 1.2 L11.6 1.2 L11.2 5.6 Z" fill="#70acdc"/></svg>
<div class="ab lav" style="left:223px;top:622px;width:76px;height:30px"></div>
<div class="ab gl" style="left:299px;top:622px;width:1px;height:31px"></div>
<div class="ab lav" style="left:301px;top:622px;width:293px;height:30px"></div>
<div class="ab gl" style="left:594px;top:622px;width:1px;height:31px"></div>
<div class="ab lav" style="left:596px;top:622px;width:84px;height:30px"></div>
<div class="ab gl" style="left:680px;top:622px;width:1px;height:31px"></div>
<div class="ab lav" style="left:682px;top:622px;width:277px;height:30px"></div>
<div class="ab gl" style="left:959px;top:622px;width:1px;height:31px"></div>
<div class="ab lav" style="left:961px;top:622px;width:44px;height:30px"></div>
<div class="ab gl" style="left:1005px;top:622px;width:1px;height:31px"></div>
<div class="ab gl" style="left:223px;top:652px;width:783px;height:1px"></div>
<div class="t tm" style="left:223px;width:76px;top:629px">15:20</div>
<div class="ab ev" style="left:304px;top:625px;color:#c8101a">Kalle Koljonen (FIN)</div>
<div class="star" style="left:576px;top:626px"><svg width="13" height="13" viewBox="0 0 13 13" style="position:absolute;left:0;top:0"><path d="M6.50 1.00 L8.41 4.47 L12.30 5.21 L9.59 8.10 L10.09 12.04 L6.50 10.35 L2.91 12.04 L3.41 8.10 L0.70 5.21 L4.59 4.47 Z" fill="#fff" stroke="#1f5c9c" stroke-width="0.9" stroke-linejoin="round"/></svg></div>
<div class="ab odds" style="left:596px;width:82px;top:623px">1.10</div>
<div class="t" style="left:684px;top:626px;font-size:11px;font-weight:bold;color:#666">1.5</div>
<div class="t" style="left:745px;top:626px;font-size:11px;font-weight:bold;color:#111">0.54</div>
<div class="ab" style="left:0;top:641px;width:1024px;height:2px;background:#fff"></div>
</body></html>
